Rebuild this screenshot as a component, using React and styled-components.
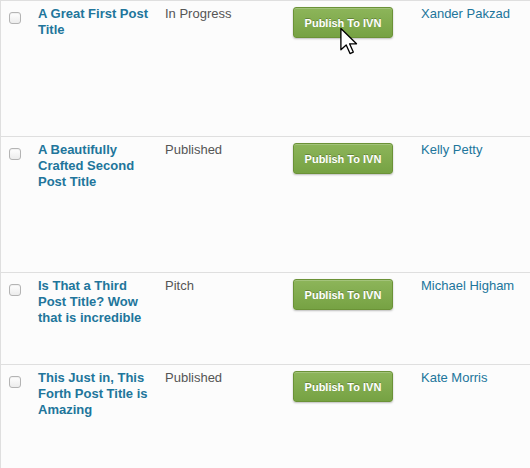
import React from 'react';
import styled, { createGlobalStyle } from 'styled-components';

const posts = [
  { title: 'A Great First Post Title', status: 'In Progress', author: 'Xander Pakzad', height: 136, hover: true },
  { title: 'A Beautifully Crafted Second Post Title', status: 'Published', author: 'Kelly Petty', height: 136 },
  { title: 'Is That a Third Post Title? Wow that is incredible', status: 'Pitch', author: 'Michael Higham', height: 92 },
  { title: 'This Just in, This Forth Post Title is Amazing', status: 'Published', author: 'Kate Morris', height: 110 },
];

export default function App() {
  return (
    <>
      <GlobalStyle />
      <Table>
        {posts.map((post) => (
          <Row key={post.title} $height={post.height}>
            <CheckCell>
              <Check type="checkbox" />
            </CheckCell>
            <TitleCell>
              <TitleLink href="#">{post.title}</TitleLink>
            </TitleCell>
            <StatusCell>{post.status}</StatusCell>
            <ButtonCell>
              <PublishButton type="button">Publish To IVN</PublishButton>
              {post.hover && (
                <Cursor width="20" height="28" viewBox="0 0 13 19">
                  <path
                    d="M1 1 L1 15.5 L4.6 12.2 L7.2 18 L9.4 17 L6.9 11.4 L11.6 11.4 Z"
                    fill="#fff"
                    stroke="#000"
                    strokeWidth="0.9"
                    strokeLinejoin="round"
                  />
                </Cursor>
              )}
            </ButtonCell>
            <AuthorCell>
              <AuthorLink href="#">{post.author}</AuthorLink>
            </AuthorCell>
          </Row>
        ))}
      </Table>
    </>
  );
}

const GlobalStyle = createGlobalStyle`
  html, body {
    margin: 0;
    padding: 0;
    background: #fcfcfc;
  }
  body {
    font-family: "Liberation Sans", Arial, sans-serif;
    font-size: 13px;
    overflow: hidden;
  }
`;

const Table = styled.div`
  width: 530px;
  border-left: 1px solid #dfdfdf;
  background: #fcfcfc;
`;

const Row = styled.div`
  display: grid;
  grid-template-columns: 37px 127px 128px 128px 1fr;
  height: ${(p) => p.$height}px;
  box-sizing: border-box;
  border-top: 1px solid #dfdfdf;
  padding-top: 5px;
`;

const CheckCell = styled.div`
  padding: 6px 0 0 8px;
`;

const Check = styled.input`
  appearance: none;
  display: block;
  margin: 0;
  width: 12px;
  height: 12px;
  border: 1px solid #b4b4b4;
  border-radius: 3px;
  box-sizing: border-box;
  background: linear-gradient(#ffffff, #ececec);
  box-shadow: inset 0 1px 1px rgba(0, 0, 0, 0.06);
`;

const TitleCell = styled.div`
  line-height: 16px;
  padding-right: 9px;
`;

const TitleLink = styled.a`
  color: #21759b;
  font-weight: bold;
  font-size: 13px;
  text-decoration: none;
`;

const StatusCell = styled.div`
  color: #555;
  line-height: 16px;
`;

const ButtonCell = styled.div`
  position: relative;
  padding-top: 1px;
`;

const PublishButton = styled.button`
  display: block;
  width: 100px;
  height: 31px;
  padding: 0;
  margin: 0;
  border: 1px solid #6b9237;
  border-radius: 3px;
  background: linear-gradient(#8db55a, #76a243);
  box-shadow: 0 1px 2px rgba(0, 0, 0, 0.25), inset 0 1px 0 rgba(255, 255, 255, 0.2);
  color: #fff;
  font-family: "Liberation Sans", Arial, sans-serif;
  font-size: 11px;
  font-weight: bold;
  text-shadow: 0 -1px 0 rgba(0, 0, 0, 0.25);
`;

const Cursor = styled.svg`
  position: absolute;
  left: 46px;
  top: 21px;
`;

const AuthorCell = styled.div`
  line-height: 16px;
`;

const AuthorLink = styled.a`
  color: #21759b;
  text-decoration: none;
`;
